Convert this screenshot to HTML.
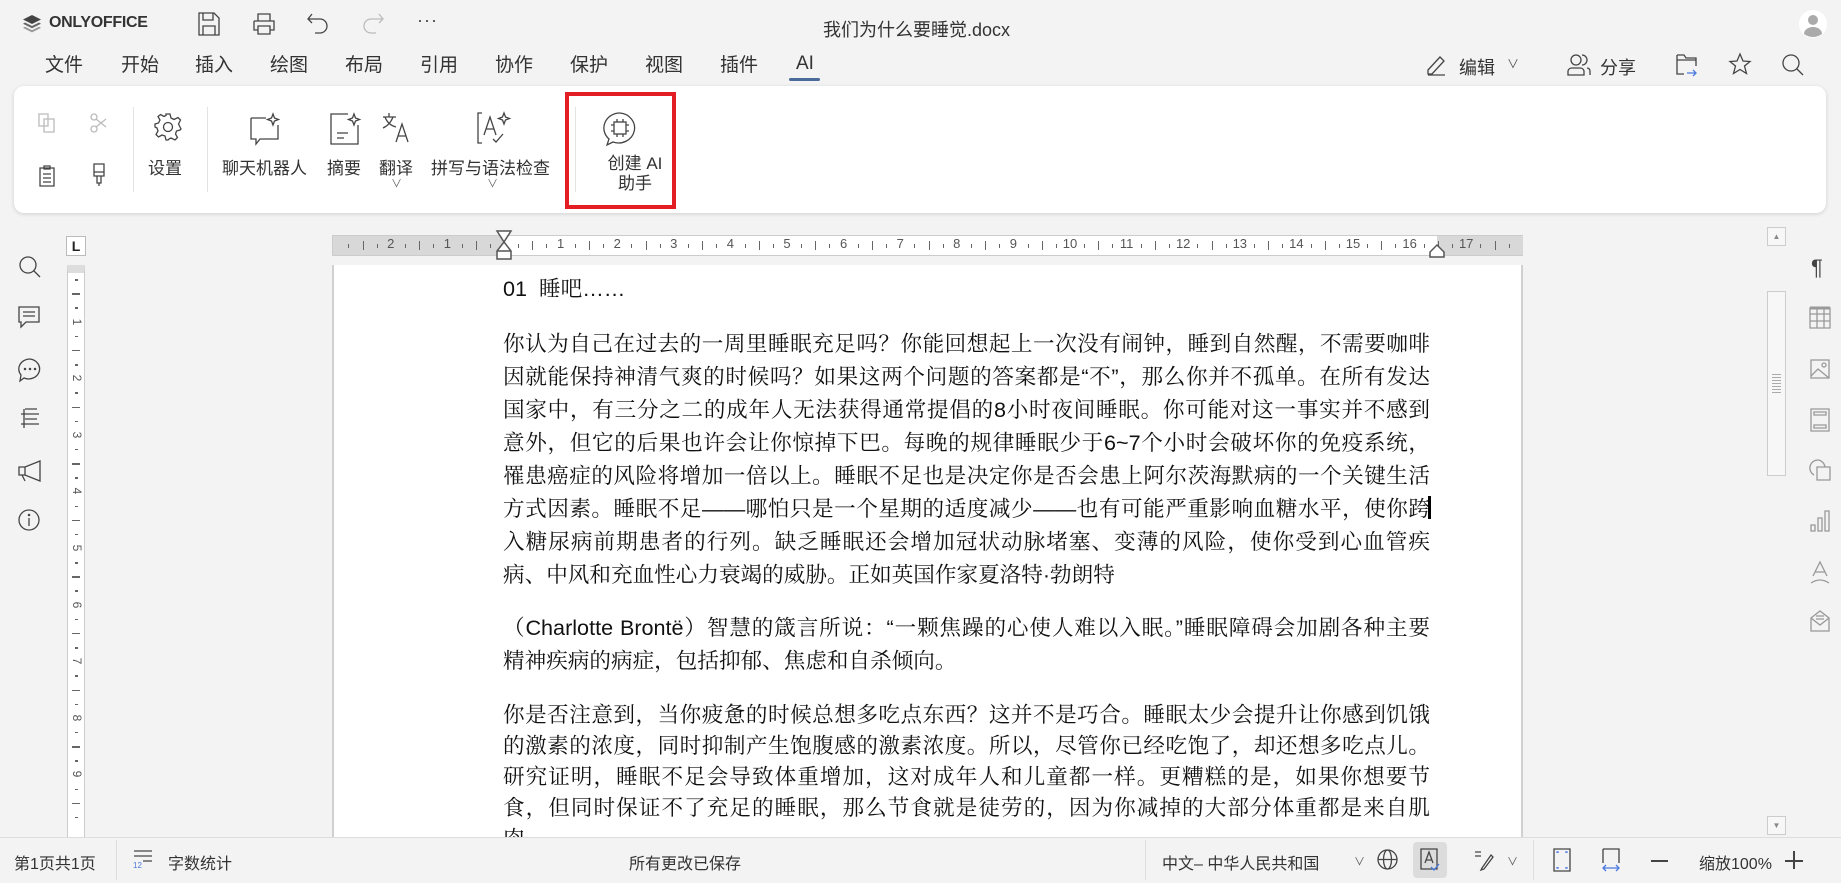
<!DOCTYPE html>
<html><head><meta charset="utf-8">
<style>
*{margin:0;padding:0;box-sizing:border-box}
body{width:1841px;height:883px;background:#f3f3f3;font-family:"Liberation Sans","Noto Sans CJK SC",sans-serif;color:#222;position:relative;overflow:hidden}
.a{position:absolute}
.menu{font-size:19px;color:#333;top:50px}
svg{overflow:visible}
.ic{position:absolute;fill:none;stroke:#444;stroke-width:1.3}
.tl{font-size:17px;color:#333;position:absolute;text-align:center;white-space:nowrap}
.doc{font-family:"Liberation Sans","Noto Serif CJK SC",serif;font-size:21.6px;color:#111;position:absolute;left:503px;width:927px;height:32px;line-height:32px;white-space:nowrap}
.j{text-align:justify;text-align-last:justify}
.st{position:absolute;top:850px;font-size:16px;color:#333;white-space:nowrap}
</style></head><body>
<!-- title bar -->
<svg class="a" style="left:22px;top:14px" width="20" height="20" viewBox="0 0 20 20"><path d="M10 1 L19 5.5 L10 10 L1 5.5Z" fill="#444"/><path d="M3 8.5 L10 12 L17 8.5 L19 9.7 L10 14.2 L1 9.7Z" fill="#666"/><path d="M3 12.7 L10 16.2 L17 12.7 L19 13.9 L10 18.4 L1 13.9Z" fill="#999"/></svg>
<div class="a" style="left:49px;top:14px;font-size:16px;font-weight:bold;color:#333;letter-spacing:-0.3px">ONLYOFFICE</div>
<svg class="ic" style="left:198px;top:12px" width="22" height="24"><path d="M1 1H16L21 6V23H1Z M5 1V8H15V1 M5 23V14H17V23"/></svg>
<svg class="ic" style="left:252px;top:13px" width="24" height="22"><path d="M6 8V1H18V8 M2 8H22V17H18 M6 17H2V8 M6 13H18V21H6Z"/></svg>
<svg class="ic" style="left:307px;top:13px" width="22" height="22"><path d="M5 1L1 6L5 10 M1 6H13A7 7 0 0 1 13 20H8"/></svg>
<svg class="ic" style="left:362px;top:13px;stroke:#bbb" width="22" height="22"><path d="M17 1L21 6L17 10 M21 6H9A7 7 0 0 0 9 20H14"/></svg>
<div class="a" style="left:417px;top:10px;font-size:18px;color:#444;letter-spacing:1px">···</div>
<div class="a" style="left:823px;top:16px;font-size:18px;color:#333">我们为什么要睡觉.docx</div>
<svg class="a" style="left:1799px;top:10px" width="28" height="28"><circle cx="14" cy="14" r="14" fill="#fff"/><circle cx="14" cy="10" r="5" fill="#aaa"/><path d="M5 24A9 7 0 0 1 23 24Q14 30 5 24Z" fill="#aaa"/></svg>
<!-- menu -->
<div class="a menu" style="left:45px">文件</div>
<div class="a menu" style="left:121px">开始</div>
<div class="a menu" style="left:195px">插入</div>
<div class="a menu" style="left:270px">绘图</div>
<div class="a menu" style="left:345px">布局</div>
<div class="a menu" style="left:420px">引用</div>
<div class="a menu" style="left:495px">协作</div>
<div class="a menu" style="left:570px">保护</div>
<div class="a menu" style="left:645px">视图</div>
<div class="a menu" style="left:720px">插件</div>
<div class="a menu" style="left:796px;top:53px">AI</div>
<div class="a" style="left:789px;top:78px;width:31px;height:3px;background:#4a6a9a;border-radius:2px"></div>
<svg class="ic" style="left:1425px;top:54px" width="22" height="22"><path d="M3 16L15 3L19 7L7 20H3Z M3 21H20"/></svg>
<div class="a menu" style="left:1459px;top:54px;font-size:18px">编辑</div>
<div class="a" style="left:1507px;top:55px;font-size:12px;color:#555">&#8744;</div>
<svg class="ic" style="left:1567px;top:53px" width="24" height="24"><circle cx="9" cy="7" r="5"/><path d="M1 22V18A4 4 0 0 1 5 15H13A4 4 0 0 1 17 18V22Z M15 2A5 5 0 0 1 15 12 M20 15A3 3 0 0 1 23 18V22"/></svg>
<div class="a menu" style="left:1600px;top:54px;font-size:18px">分享</div>
<svg class="ic" style="left:1676px;top:54px" width="22" height="22"><path d="M1 1H8L10 4H20V12 M1 1V20H8 M1 6H20"/><path d="M11 19H20M17 16L20 19L17 22" stroke="#4a7adf"/></svg>
<svg class="ic" style="left:1729px;top:53px" width="22" height="22"><path d="M11 1L14 8L21 8.5L15.5 13L17.5 20.5L11 16.5L4.5 20.5L6.5 13L1 8.5L8 8Z"/></svg>
<svg class="ic" style="left:1782px;top:54px" width="22" height="22"><circle cx="9" cy="9" r="8"/><path d="M15 15L21 21"/></svg>
<!-- toolbar panel -->
<div class="a" style="left:14px;top:86px;width:1812px;height:127px;background:#fff;border-radius:10px;box-shadow:0 1px 4px rgba(0,0,0,.15)"></div>
<svg class="ic" style="left:38px;top:113px;stroke:#bbb" width="18" height="20"><path d="M1 1H10V13H1Z M6 6H16V19H6Z"/></svg>
<svg class="ic" style="left:89px;top:113px;stroke:#bbb" width="18" height="20"><circle cx="5" cy="4" r="3"/><circle cx="5" cy="16" r="3"/><path d="M7 6L17 14 M7 14L17 6"/></svg>
<svg class="ic" style="left:39px;top:165px" width="16" height="22"><path d="M1 3H15V21H1Z M5 1H11V4H5Z M4 9H12M4 13H12M4 17H12"/></svg>
<svg class="ic" style="left:92px;top:163px" width="14" height="24"><path d="M2 1H12V13H2Z M2 9H12 M5 13V20H9V13 M7 20V23"/></svg>
<div class="a" style="left:133px;top:107px;width:1px;height:85px;background:#e3e3e3"></div>
<svg class="ic" style="left:154px;top:113px" width="28" height="28" viewBox="0 0 28 28"><path d="M12 1H16L17 5L20 6.5L24 4.5L26.5 7L24.5 11L26 14L27 16L26 17L22.5 18L21.5 21L23.5 24.5L21 27L17 25L15 26L14 27H12L11 23L8 22L4.5 24L2 21.5L4 18L3 15L1 14V11L4.5 10L6 7L4 3.5L6.5 1.5L10 3.5L12 2.5Z"/><circle cx="14" cy="14" r="4.5"/></svg>
<div class="tl" style="left:148px;top:154px">设置</div>
<div class="a" style="left:207px;top:107px;width:1px;height:85px;background:#e3e3e3"></div>
<svg class="ic" style="left:250px;top:113px" width="32" height="32"><path d="M1 5H16 M28 12V26H10L6 31V26H1V5"/><path d="M23 1L24.5 5L28.5 6.5L24.5 8L23 12L21.5 8L17.5 6.5L21.5 5Z"/></svg>
<div class="tl" style="left:222px;top:154px">聊天机器人</div>
<svg class="ic" style="left:330px;top:113px" width="32" height="32"><path d="M18 1H1V31H28V12 M7 20H18 M7 25H14"/><path d="M24 1L25.5 5L29.5 6.5L25.5 8L24 12L22.5 8L18.5 6.5L22.5 5Z"/></svg>
<div class="tl" style="left:327px;top:154px">摘要</div>
<svg class="ic" style="left:382px;top:112px" width="28" height="32"><path d="M1 5H14 M7 1V5 M3 5Q6 13 14 15 M11 5Q8 13 1 16 M14 30L20 12L26 30 M16 24H24"/></svg>
<div class="tl" style="left:379px;top:154px">翻译</div>
<div class="a" style="left:391px;top:175px;font-size:11px;color:#666">&#8744;</div>
<svg class="ic" style="left:477px;top:112px" width="34" height="34"><path d="M5 1H1V31H5 M7 23L13 5L19 23 M9 17H17 M16 27L19 30L26 22"/><path d="M27 1L28.5 5L32.5 6.5L28.5 8L27 12L25.5 8L21.5 6.5L25.5 5Z"/></svg>
<div class="tl" style="left:431px;top:154px">拼写与语法检查</div>
<div class="a" style="left:487px;top:175px;font-size:11px;color:#666">&#8744;</div>
<div class="a" style="left:575px;top:107px;width:1px;height:85px;background:#e3e3e3"></div>
<svg class="ic" style="left:603px;top:112px" width="34" height="34"><path d="M17 1A16 15 0 1 1 10 30L4 33L6 27A16 15 0 0 1 17 1Z"/><rect x="11" y="10" width="12" height="12"/><path d="M14 7V10M20 7V10M14 22V25M20 22V25M8 13H11M8 19H11M23 13H26M23 19H26"/></svg>
<div class="tl" style="left:595px;top:154px;line-height:20px;width:80px">创建 AI<br>助手</div>
<div class="a" style="left:565px;top:92px;width:111px;height:117px;border:4px solid #e31e24"></div>
<!-- left icons -->
<svg class="ic" style="left:19px;top:256px" width="22" height="22"><circle cx="9" cy="9" r="8"/><path d="M15 15L21 21"/></svg>
<svg class="ic" style="left:18px;top:306px" width="22" height="24"><path d="M1 1H21V16H8L3 21V16H1Z M5 6H17M5 10H17"/></svg>
<svg class="ic" style="left:18px;top:358px" width="24" height="24"><path d="M12 1A11 10 0 1 1 6 20L2 23L3 17A11 10 0 0 1 12 1Z"/><circle cx="7" cy="11" r=".6"/><circle cx="12" cy="11" r=".6"/><circle cx="17" cy="11" r=".6"/></svg>
<svg class="ic" style="left:20px;top:408px" width="20" height="20"><path d="M5 1H17M1 6H19M5 11H17M1 16H19"/><path d="M4 1V20"/></svg>
<svg class="ic" style="left:18px;top:460px" width="24" height="22"><path d="M1 7H7L22 1V21L7 15H1Z M7 7V15 M4 15L7 21"/></svg>
<svg class="ic" style="left:18px;top:509px" width="22" height="22"><circle cx="11" cy="11" r="10"/><path d="M11 9V17"/><circle cx="11" cy="6" r=".6"/></svg>
<!-- vertical ruler -->
<div class="a" style="left:66px;top:236px;width:20px;height:20px;border:1px solid #bbb;background:#fff;font-size:14px;font-weight:bold;text-align:center;line-height:18px">L</div>
<div class="a" id="vr" style="left:67px;top:265px;width:18px;height:575px;background:#fff;border:1px solid #ccc;border-top:8px solid #ddd"></div>
<!-- horizontal ruler -->
<div class="a" id="hr" style="left:332px;top:235px;width:1191px;height:21px;background:#fff;border:1px solid #ccc;overflow:visible"></div>
<!-- page -->
<div class="a" style="left:332px;top:265px;width:1191px;height:572px;background:#fff;border-left:2px solid #d0d0d0;border-right:2px solid #d0d0d0"></div>
<div class="doc" style="top:273px">01&nbsp; 睡吧……</div>
<div class="doc j" style="top:328px">你认为自己在过去的一周里睡眠充足吗？你能回想起上一次没有闹钟，睡到自然醒，不需要咖啡</div>
<div class="doc j" style="top:361px">因就能保持神清气爽的时候吗？如果这两个问题的答案都是“不”，那么你并不孤单。在所有发达</div>
<div class="doc j" style="top:394px">国家中，有三分之二的成年人无法获得通常提倡的8小时夜间睡眠。你可能对这一事实并不感到</div>
<div class="doc j" style="top:427px">意外，但它的后果也许会让你惊掉下巴。每晚的规律睡眠少于6~7个小时会破坏你的免疫系统，</div>
<div class="doc j" style="top:460px">罹患癌症的风险将增加一倍以上。睡眠不足也是决定你是否会患上阿尔茨海默病的一个关键生活</div>
<div class="doc j" style="top:493px">方式因素。睡眠不足——哪怕只是一个星期的适度减少——也有可能严重影响血糖水平，使你跨</div>
<div class="a" style="left:1428px;top:496px;width:3px;height:23px;background:#000"></div>
<div class="doc j" style="top:526px">入糖尿病前期患者的行列。缺乏睡眠还会增加冠状动脉堵塞、变薄的风险，使你受到心血管疾</div>
<div class="doc" style="top:559px">病、中风和充血性心力衰竭的威胁。正如英国作家夏洛特·勃朗特</div>
<div class="doc j" style="top:612px">（Charlotte Brontë）智慧的箴言所说：“一颗焦躁的心使人难以入眠。”睡眠障碍会加剧各种主要</div>
<div class="doc" style="top:645px">精神疾病的病症，包括抑郁、焦虑和自杀倾向。</div>
<div class="doc j" style="top:699px">你是否注意到，当你疲惫的时候总想多吃点东西？这并不是巧合。睡眠太少会提升让你感到饥饿</div>
<div class="doc j" style="top:730px">的激素的浓度，同时抑制产生饱腹感的激素浓度。所以，尽管你已经吃饱了，却还想多吃点儿。</div>
<div class="doc j" style="top:761px">研究证明，睡眠不足会导致体重增加，这对成年人和儿童都一样。更糟糕的是，如果你想要节</div>
<div class="doc j" style="top:792px">食，但同时保证不了充足的睡眠，那么节食就是徒劳的，因为你减掉的大部分体重都是来自肌</div>
<div class="doc" style="top:823px">肉。</div>
<!-- scrollbar -->
<div class="a" style="left:1767px;top:227px;width:19px;height:19px;border:1px solid #ccc;background:#f7f7f7;font-size:8px;color:#888;text-align:center;line-height:17px">▲</div>
<div class="a" style="left:1767px;top:291px;width:19px;height:185px;border:1px solid #ccc;background:#f7f7f7"></div>
<div class="a" style="left:1772px;top:374px;width:9px;height:20px;background:repeating-linear-gradient(#aaa 0 1px,transparent 1px 3px)"></div>
<div class="a" style="left:1767px;top:816px;width:19px;height:19px;border:1px solid #ccc;background:#f7f7f7;font-size:8px;color:#888;text-align:center;line-height:17px">▼</div>
<!-- right icons -->
<div class="a" style="left:1811px;top:255px;font-size:22px;color:#444">¶</div>
<svg class="ic" style="left:1809px;top:307px;stroke:#999" width="22" height="22"><path d="M1 1H21V21H1Z M1 7H21M1 14H21M8 1V21M15 1V21"/><path d="M1 1H21" stroke-width="3"/></svg>
<svg class="ic" style="left:1810px;top:359px;stroke:#999" width="20" height="20"><path d="M1 1H19V19H1Z M1 17L8 10L19 19"/><circle cx="14" cy="6" r="2"/></svg>
<svg class="ic" style="left:1810px;top:408px;stroke:#999" width="20" height="24"><path d="M1 1H19V23H1Z M4 4H16V7H4Z M4 17H16V20H4Z"/></svg>
<svg class="ic" style="left:1809px;top:459px;stroke:#999" width="22" height="22"><path d="M9 1A8 8 0 0 0 5 16 M8 8H21V21H8Z M9 1A8 8 0 0 1 16 8"/></svg>
<svg class="ic" style="left:1810px;top:510px;stroke:#999" width="20" height="22"><path d="M1 15H5V21H1Z M8 8H12V21H8Z M15 1H19V21H15Z"/></svg>
<svg class="ic" style="left:1810px;top:561px;stroke:#999" width="20" height="24"><path d="M3 15L10 1L17 15 M5 11H15 M1 22Q10 16 19 22"/></svg>
<svg class="ic" style="left:1810px;top:610px;stroke:#999" width="20" height="22"><path d="M1 8L10 1L19 8V21H1Z M1 8L10 15L19 8 M6 6H14M6 9H14"/></svg>
<!-- status bar -->
<div class="a" style="left:0;top:837px;width:1841px;height:46px;background:#f3f3f3;border-top:1px solid #ddd"></div>
<div class="st" style="left:14px">第1页共1页</div>
<div class="a" style="left:116px;top:840px;width:1px;height:40px;background:#ddd"></div>
<svg class="ic" style="left:133px;top:849px" width="20" height="20"><path d="M1 2H19M1 7H19M10 12H19"/></svg>
<div class="a" style="left:133px;top:861px;font-size:8px;color:#4a7adf">12</div>
<div class="st" style="left:168px">字数统计</div>
<div class="st" style="left:629px">所有更改已保存</div>
<div class="a" style="left:1145px;top:840px;width:1px;height:40px;background:#ddd"></div>
<div class="st" style="left:1162px">中文– 中华人民共和国</div>
<div class="a" style="left:1354px;top:853px;font-size:11px;color:#555">&#8744;</div>
<svg class="ic" style="left:1377px;top:849px" width="21" height="21"><circle cx="10.5" cy="10.5" r="9.5"/><ellipse cx="10.5" cy="10.5" rx="4" ry="9.5"/><path d="M1 10.5H20"/></svg>
<div class="a" style="left:1413px;top:842px;width:34px;height:36px;background:#dcdcdc;border-radius:4px"></div>
<svg class="ic" style="left:1420px;top:848px" width="20" height="24"><path d="M1 1H17V21H1Z M5 15L9 4L13 15 M6 12H12"/><path d="M11 19L14 22L19 16" stroke="#4a7adf"/></svg>
<svg class="ic" style="left:1474px;top:850px" width="20" height="20"><path d="M1 2H7M1 6H7 M8 18L17 5L19 7L10 19L7 20Z"/></svg>
<div class="a" style="left:1507px;top:853px;font-size:11px;color:#555">&#8744;</div>
<div class="a" style="left:1533px;top:840px;width:1px;height:40px;background:#ddd"></div>
<svg class="ic" style="left:1553px;top:848px" width="18" height="24"><path d="M1 1H17V23H1Z"/><path d="M4 5V4H6M12 4H14V5M4 19V20H6M12 20H14V19" stroke="#4a7adf"/></svg>
<svg class="ic" style="left:1601px;top:848px" width="20" height="24"><path d="M2 1H18V15 M2 1V15"/><path d="M2 20H18 M5 17L2 20L5 23 M15 17L18 20L15 23" stroke="#4a7adf"/></svg>
<div class="a" style="left:1651px;top:860px;width:17px;height:1.5px;background:#444"></div>
<div class="st" style="left:1699px">缩放100%</div>
<div class="a" style="left:1785px;top:860px;width:18px;height:1.5px;background:#444"></div>
<div class="a" style="left:1793px;top:851px;width:1.5px;height:18px;background:#444"></div>
<script>
var hr=document.getElementById('hr');
var h='';
h+='<div style="position:absolute;left:0;top:0;width:170px;height:19px;background:#d8d8d8"></div>';
h+='<div style="position:absolute;left:1104px;top:0;width:86px;height:19px;background:#d8d8d8"></div>';
var z=171,c=56.6;
for(var i=-3;i<=18;i++){for(var q=0;q<4;q++){var x=z+i*c+q*c/4;if(x<4||x>1186)continue;
 if(q==0){if(i!=0)h+='<div style="position:absolute;left:'+(x-10)+'px;top:0px;width:20px;text-align:center;font-size:13px;color:#555">'+Math.abs(i)+'</div>';}
 else if(q==2)h+='<div style="position:absolute;left:'+x+'px;top:5px;width:1px;height:9px;background:#666"></div>';
 else h+='<div style="position:absolute;left:'+x+'px;top:8px;width:1px;height:4px;background:#666"></div>';}}
h+='<svg style="position:absolute;left:162px;top:-6px" width="18" height="30"><path d="M2 1H16L9 12L16 21V29H2V21L9 12L2 1Z M2 21H16" fill="#fff" stroke="#555" stroke-width="1.5"/></svg>';
h+='<svg style="position:absolute;left:1096px;top:8px" width="16" height="14"><path d="M1 13V8L8 1L15 8V13Z" fill="#fff" stroke="#555" stroke-width="1.5"/></svg>';
hr.innerHTML=h;
var vr=document.getElementById('vr');h='';
for(var i=0;i<10;i++){for(var q=0;q<4;q++){var y=i*c+q*c/4-8;if(y<2||y>565)continue;
 if(q==0){if(i>0)h+='<div style="position:absolute;left:2px;top:'+(y-7)+'px;width:14px;text-align:center;font-size:12px;color:#555;transform:rotate(90deg)">'+i+'</div>';}
 else if(q==2)h+='<div style="position:absolute;left:4px;top:'+y+'px;width:8px;height:1.5px;background:#666"></div>';
 else h+='<div style="position:absolute;left:7px;top:'+y+'px;width:3px;height:1.5px;background:#666"></div>';}}
vr.innerHTML=h;
</script>
</body></html>
